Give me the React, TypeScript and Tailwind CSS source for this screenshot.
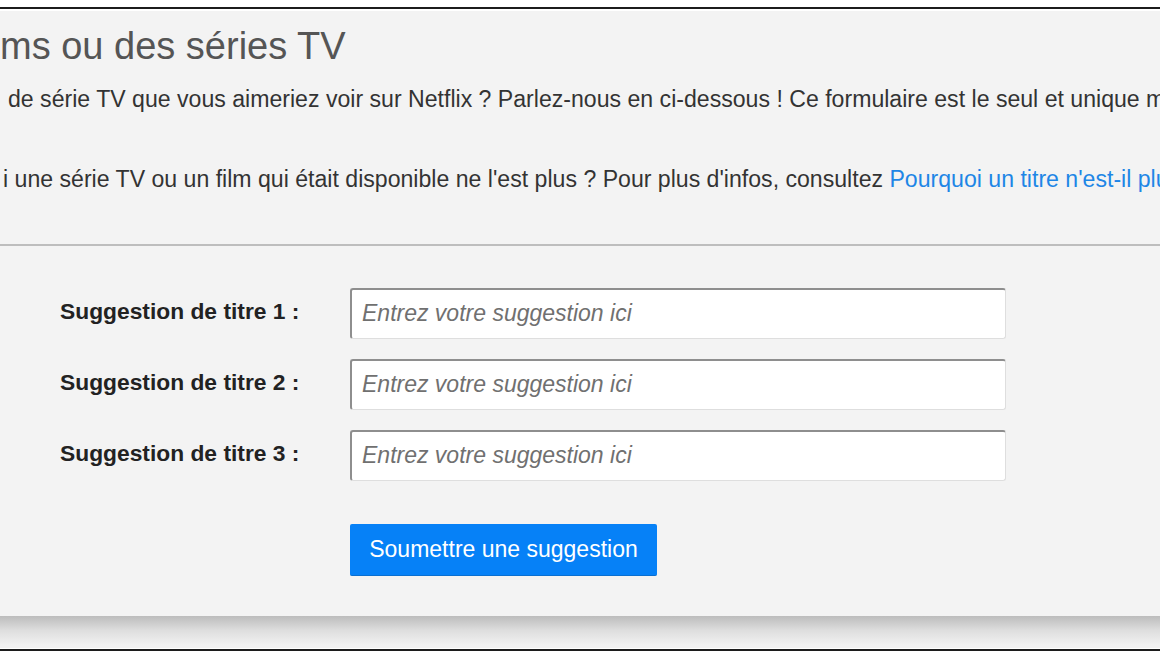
import React from 'react'

const font = { fontFamily: '"Liberation Sans", Arial, sans-serif' }

const rows = [1, 2, 3]

export default function App() {
  return (
    <div className="w-[1160px] h-[653px] bg-white overflow-hidden flex flex-col" style={font}>
      <div className="h-[7px] shrink-0" />
      <div className="h-[2px] shrink-0 bg-[#1c1c1c]" />
      <div className="h-[2px] shrink-0 bg-white" />

      <div className="shrink-0 h-[605px] bg-[#f3f3f3] flex flex-col overflow-hidden">
        <h1 className="pt-[13px] text-[38px] leading-[1.2] text-[#555] font-normal whitespace-nowrap">
          ms ou des séries TV
        </h1>
        <p className="mt-[13px] pl-[8px] text-[23.1px] leading-[32px] text-[#333] whitespace-nowrap">
          de série TV que vous aimeriez voir sur Netflix ? Parlez-nous en ci-dessous ! Ce formulaire est le seul et unique moyen de nous faire part de vos suggestions.
        </p>
        <p className="mt-[48px] pl-[3px] text-[23.1px] leading-[32px] text-[#333] whitespace-nowrap">
          i une série TV ou un film qui était disponible ne l'est plus ? Pour plus d'infos, consultez{' '}
          <a className="text-[#1e86e6]">Pourquoi un titre n'est-il plus disponible ?</a>
        </p>

        <div className="mt-[49px] h-[2px] bg-[#bdbdbd]" />

        <form className="pt-[42px] pl-[60px] flex flex-col gap-[20px]" onSubmit={e => e.preventDefault()}>
          {rows.map(n => (
            <div key={n} className="flex items-start">
              <label className="w-[290px] pt-[7px] text-[22.8px] leading-[32px] font-bold text-[#222] whitespace-nowrap">
                Suggestion de titre {n} :
              </label>
              <input
                type="text"
                placeholder="Entrez votre suggestion ici"
                className="w-[656px] h-[51px] bg-white rounded-[3px] border border-[#dedede] border-t-2 border-l-2 border-t-[#8e8e8e] border-l-[#8e8e8e] pl-[10px] text-[23px] text-[#333] italic placeholder:text-[#707070] outline-none"
              />
            </div>
          ))}
          <div className="pl-[290px] pt-[23px]">
            <button
              type="submit"
              className="w-[307px] h-[52px] bg-[#0681f7] rounded-[2px] border-b border-[#0a6fd0] text-white text-[23px] leading-none"
            >
              Soumettre une suggestion
            </button>
          </div>
        </form>
      </div>

      <div className="h-[29px] shrink-0 bg-linear-to-b from-[#bcbcbc] via-[#dedede] to-[#f1f1f1]" />
      <div className="h-[3px] shrink-0 bg-[#f1f1f1]" />
      <div className="h-px shrink-0 bg-white" />
      <div className="h-[2px] shrink-0 bg-[#1c1c1c]" />
    </div>
  )
}
